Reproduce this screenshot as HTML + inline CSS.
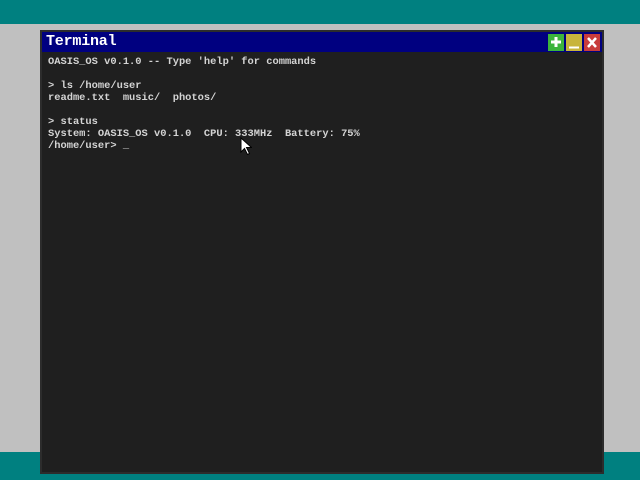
<!DOCTYPE html>
<html><head><meta charset="utf-8"><style>
html,body{margin:0;padding:0;width:640px;height:480px;overflow:hidden;background:#c0c0c0;position:relative}
.top{position:absolute;left:0;top:0;width:640px;height:24px;background:#008080}
.bot{position:absolute;left:0;top:452px;width:640px;height:28px;background:#008080}
.win{position:absolute;left:40px;top:30px;width:560px;height:440px;background:#1f1f1f;border:2px solid #2c2c2c}
.title{position:absolute;left:0;top:0;width:560px;height:20px;background:#000080}
.title span{position:absolute;left:4px;top:1px;font:bold 15px "Liberation Mono",monospace;color:#fff;letter-spacing:-0.2px}
.b{position:absolute;top:2px;width:16px;height:17px}
.txt{position:absolute;left:6px;top:24px;font:10.4px/12px "Liberation Mono",monospace;color:#d4d4d4;white-space:pre;font-weight:bold}
</style></head><body>
<div class="top"></div><div class="bot"></div>
<div class="win">
<div class="title"><span>Terminal</span>
<div class="b" style="left:506px;background:#3cb43c"><svg width="16" height="17"><path d="M8 3v10M3 8h10" stroke="#fff" stroke-width="3"/></svg></div>
<div class="b" style="left:524px;background:#c8b43c"><svg width="16" height="17"><path d="M3 13.5h10" stroke="#fff" stroke-width="2"/></svg></div>
<div class="b" style="left:542px;background:#c83c3c"><svg width="16" height="17"><path d="M4 4l8 9M12 4l-8 9" stroke="#fff" stroke-width="2.5"/></svg></div>
</div>
<div class="txt">OASIS_OS v0.1.0 -- Type 'help' for commands

&gt; ls /home/user
readme.txt  music/  photos/

&gt; status
System: OASIS_OS v0.1.0  CPU: 333MHz  Battery: 75%
/home/user&gt; _</div>
</div>
<svg style="position:absolute;left:240px;top:137px" width="12" height="18"><path d="M1 1v14l3.5-3.5 3 6 2-1-3-6h5z" fill="#fff" stroke="#000" stroke-width="1"/></svg>
</body></html>
